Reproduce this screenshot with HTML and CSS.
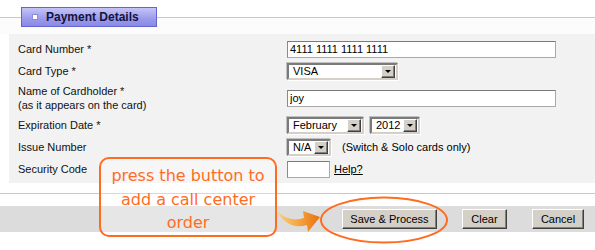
FILE: index.html
```html
<!DOCTYPE html>
<html lang="en">
<head>
    <meta charset="UTF-8">
    <title>Payment Details</title>
    <link rel="stylesheet" href="styles.css">
</head>
<body>
    <div class="form">
        <div class="section-head">
            <span class="rule rule-left"></span>
            <h2 class="tab"><span class="tab-icon"></span>Payment Details</h2>
            <span class="rule rule-right"></span>
        </div>

        <div class="panel">
            <div class="row">
                <label class="label">Card Number *</label>
                <div class="field"><input class="text text-wide" type="text" value="4111 1111 1111 1111"></div>
            </div>
            <div class="row">
                <label class="label">Card Type *</label>
                <div class="field">
                    <span class="select select-type"><span class="select-value">VISA</span><span class="select-btn"></span></span>
                </div>
            </div>
            <div class="row row-tall">
                <label class="label">Name of Cardholder *<br>(as it appears on the card)</label>
                <div class="field"><input class="text text-wide" type="text" value="joy"></div>
            </div>
            <div class="row">
                <label class="label">Expiration Date *</label>
                <div class="field">
                    <span class="select select-month"><span class="select-value">February</span><span class="select-btn"></span></span>
                    <span class="select select-year"><span class="select-value">2012</span><span class="select-btn"></span></span>
                </div>
            </div>
            <div class="row">
                <label class="label">Issue Number</label>
                <div class="field">
                    <span class="select select-issue"><span class="select-value">N/A</span><span class="select-btn"></span></span>
                    <span class="note">(Switch &amp; Solo cards only)</span>
                </div>
            </div>
            <div class="row">
                <label class="label">Security Code</label>
                <div class="field">
                    <input class="text text-code" type="text" value="">
                    <a class="help" href="#">Help?</a>
                </div>
            </div>
        </div>

        <div class="divider"></div>

        <div class="actions">
            <button class="btn btn-save">Save &amp; Process</button>
            <button class="btn btn-clear">Clear</button>
            <button class="btn btn-cancel">Cancel</button>
        </div>

        <!-- annotation overlay -->
        <div class="callout">press the button to<br>add a call center<br>order</div>
        <svg class="arrow" width="52" height="40" viewBox="0 0 52 40">
            <defs>
                <linearGradient id="arrowFill" x1="0" y1="0" x2="1" y2="0">
                    <stop offset="0" stop-color="#fbd28a"/>
                    <stop offset="0.5" stop-color="#f7a640"/>
                    <stop offset="1" stop-color="#e8700e"/>
                </linearGradient>
            </defs>
            <path d="M4,12 Q16,25 32,20 L31,13 L48,19 L36,34 L35,27 Q16,33 4,12 Z" fill="url(#arrowFill)"/>
        </svg>
        <svg class="ring" width="130" height="50" viewBox="0 0 130 50">
            <ellipse cx="65" cy="24" rx="63" ry="22.5" fill="none" stroke="#ff6c1f" stroke-width="2"/>
        </svg>
    </div>
</body>
</html>
```

FILE: styles.css
```css
body {
    margin: 0;
    background: #fff;
    font-family: 'Liberation Sans', Arial, sans-serif;
    font-size: 11px;
    color: #000;
}

.form {
    position: relative;
    width: 595px;
    height: 250px;
}

/* heading tab over the rule */
.section-head {
    display: flex;
    align-items: center;
    height: 34px;
    background: linear-gradient(180deg, #fff 0, #fff 17px, #fcfcfc 17px);
}

.rule {
    height: 1px;
    background: #c8c8c8;
}

.rule-left {
    width: 21px;
}

.rule-right {
    flex: 1;
}

.tab {
    display: flex;
    align-items: center;
    box-sizing: border-box;
    width: 136px;
    height: 20px;
    margin: 0;
    padding-left: 10px;
    background: linear-gradient(180deg, #c4c4f8 0%, #9a9aec 60%, #8a8ae4 100%);
    border: 1px solid #6464d0;
    font-size: 12px;
    font-weight: bold;
    color: #14143c;
}

.tab-icon {
    width: 4px;
    height: 4px;
    margin-right: 8px;
    background: #fff;
    border: 1px solid #8c8cd8;
}

/* form panel */
.panel {
    margin-left: 9px;
    padding: 4px 0 3px 9px;
    background: #f2f2f2;
}

.row {
    display: flex;
    align-items: center;
    height: 22px;
}

.row-tall {
    height: 32px;
}

.label {
    width: 269px;
    flex-shrink: 0;
    line-height: 14px;
    color: #111;
}

.field {
    display: flex;
    align-items: center;
}

.text {
    box-sizing: border-box;
    height: 17px;
    margin: 0;
    padding: 0 2px;
    font-family: inherit;
    font-size: 11px;
    background: #fff;
    border: 1px solid #a9a9a9;
    border-top-color: #7a7a7a;
    border-left-color: #8a8a8a;
    outline: none;
}

.text-wide {
    width: 269px;
}

.text-code {
    width: 43px;
}

.select {
    display: flex;
    align-items: center;
    justify-content: space-between;
    box-sizing: border-box;
    height: 17px;
    padding: 0 1px 0 4px;
    background: #fff;
    border: 2px solid;
    border-color: #7a7a7a #d4d0c8 #d4d0c8 #7a7a7a;
    box-shadow: -1px -1px 0 #c0c0c0, 1px 1px 0 #fff;
}

.select-type {
    width: 111px;
}

.select-month {
    width: 77px;
    margin-right: 6px;
}

.select-year {
    width: 50px;
}

.select-issue {
    width: 44px;
}

.select-btn {
    position: relative;
    box-sizing: border-box;
    width: 14px;
    height: 13px;
    background: #d4d0c8;
    border: 1px solid;
    border-color: #fff #404040 #404040 #fff;
    box-shadow: inset -1px -1px 0 #808080;
}

.select-btn::after {
    content: '';
    position: absolute;
    left: 3px;
    top: 4px;
    border-left: 3px solid transparent;
    border-right: 3px solid transparent;
    border-top: 3px solid #000;
}

.note {
    margin-left: 11px;
}

.help {
    margin-left: 4px;
    color: #000;
    text-decoration: underline;
}

.divider {
    height: 1px;
    margin-top: 10px;
    background: #c8c8c8;
}

/* button bar */
.actions {
    display: flex;
    align-items: center;
    justify-content: flex-end;
    gap: 25px;
    height: 26px;
    margin-top: 12px;
    padding-right: 11px;
    background: #dcdcdc;
}

.btn {
    box-sizing: border-box;
    height: 20px;
    padding: 0;
    font-family: inherit;
    font-size: 11px;
    color: #000;
    background: #d4d0c8;
    border: 1px solid;
    border-color: #fff #404040 #404040 #fff;
    box-shadow: inset -1px -1px 0 #808080;
}

.btn-save {
    width: 95px;
}

.btn-clear {
    width: 45px;
}

.btn-cancel {
    width: 52px;
}

/* annotation */
.callout {
    position: absolute;
    left: 99px;
    top: 157px;
    box-sizing: border-box;
    width: 178px;
    height: 80px;
    padding-top: 5px;
    background: rgba(255, 255, 255, 0.3);
    border: 2px solid #ff6c1f;
    border-radius: 10px;
    font-family: 'DejaVu Sans', Verdana, sans-serif;
    font-size: 16px;
    line-height: 23.5px;
    text-align: center;
    color: #ff6c1f;
}

.arrow {
    position: absolute;
    left: 272px;
    top: 198px;
}

.ring {
    position: absolute;
    left: 319px;
    top: 196px;
}
```
